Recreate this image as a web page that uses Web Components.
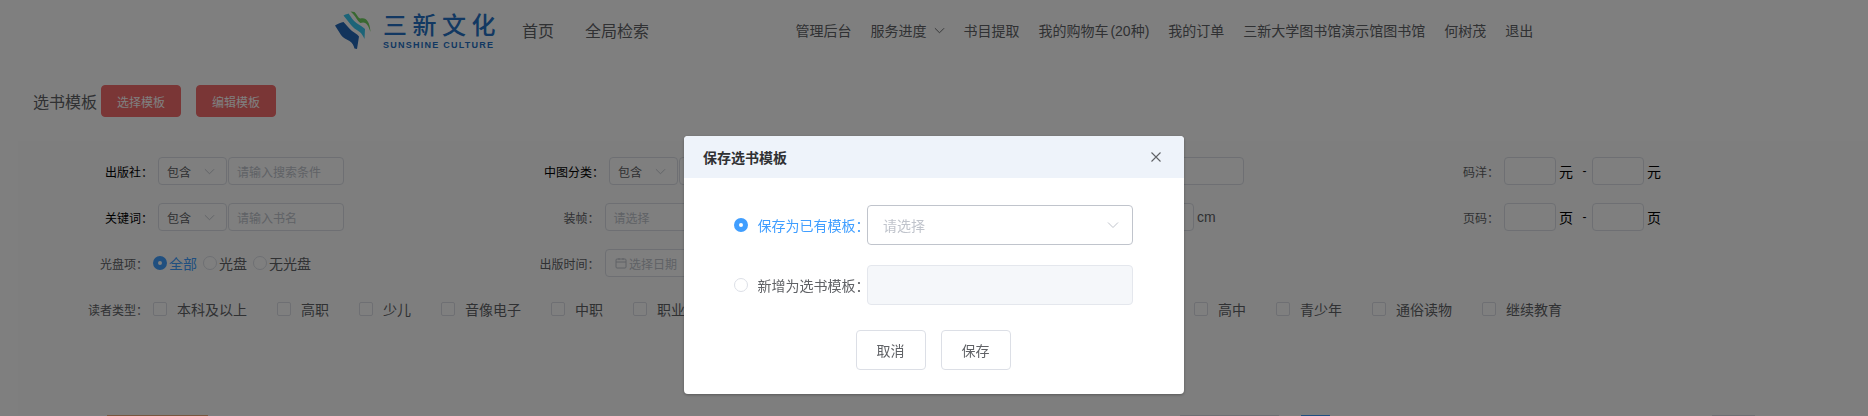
<!doctype html>
<html lang="zh">
<head>
<meta charset="utf-8">
<title>选书模板</title>
<style>
  html, body { margin: 0; height: 416px; overflow: hidden; background: #fff; }
  body { font-family: "Liberation Sans", "Noto Sans CJK SC", sans-serif; color: #606266; }
</style>
</head>
<body>
<app-nav></app-nav>

<template-bar>
  <ui-button kind="danger">选择模板</ui-button>
  <ui-button kind="danger">编辑模板</ui-button>
</template-bar>

<filter-panel>
  <filter-row>
    <filter-field label="出版社：" w="446" lw="140" strong>
      <ui-select value="包含"></ui-select>
      <ui-input w="116" placeholder="请输入搜索条件"></ui-input>
    </filter-field>
    <filter-field label="中图分类：" w="892" lw="145" strong>
      <ui-select value="包含" ></ui-select>
      <ui-input w="565"></ui-input>
    </filter-field>
    <filter-field label="码洋：" lw="148">
      <ui-input w="52"></ui-input><unit-text>元</unit-text><unit-text dash>-</unit-text>
      <ui-input w="52"></ui-input><unit-text>元</unit-text>
    </filter-field>
  </filter-row>

  <filter-row>
    <filter-field label="关键词：" w="446" lw="140" strong>
      <ui-select value="包含"></ui-select>
      <ui-input w="116" placeholder="请输入书名"></ui-input>
    </filter-field>
    <filter-field label="装帧：" w="892" lw="140.5">
      <ui-input w="589.5" placeholder="请选择"></ui-input><unit-text soft>cm</unit-text>
    </filter-field>
    <filter-field label="页码：" lw="148">
      <ui-input w="52"></ui-input><unit-text>页</unit-text><unit-text dash>-</unit-text>
      <ui-input w="52"></ui-input><unit-text>页</unit-text>
    </filter-field>
  </filter-row>

  <filter-row>
    <filter-field label="光盘项：" w="446" lw="135">
      <ui-radio checked compact>全部</ui-radio>
      <ui-radio compact>光盘</ui-radio>
      <ui-radio compact>无光盘</ui-radio>
    </filter-field>
    <filter-field label="出版时间：" lw="140.5">
      <ui-input w="220" placeholder="选择日期" date></ui-input>
    </filter-field>
  </filter-row>

  <filter-row>
    <filter-field label="读者类型：" lw="135">
      <ui-check>本科及以上</ui-check>
      <ui-check>高职</ui-check>
      <ui-check>少儿</ui-check>
      <ui-check>音像电子</ui-check>
      <ui-check>中职</ui-check>
      <ui-check style="margin-right:509px">职业</ui-check>
      <ui-check>高中</ui-check>
      <ui-check>青少年</ui-check>
      <ui-check>通俗读物</ui-check>
      <ui-check>继续教育</ui-check>
    </filter-field>
  </filter-row>
</filter-panel>

<result-strip></result-strip>

<modal-dialog heading="保存选书模板">
  <save-option checked label="保存为已有模板：">
    <ui-select big placeholder="请选择"></ui-select>
  </save-option>
  <save-option label="新增为选书模板：">
    <ui-input big disabled></ui-input>
  </save-option>
  <ui-button slot="footer">取消</ui-button>
  <ui-button slot="footer">保存</ui-button>
</modal-dialog>

<script>
function define(name, css, html, setup) {
  customElements.define(name, class extends HTMLElement {
    connectedCallback() {
      if (this.shadowRoot) return
      this.attachShadow({ mode: "open" })
      this.shadowRoot.innerHTML = `<style>${css}</style>` + (typeof html === "function" ? html(this) : html)
      if (setup) setup(this)
    }
  })
}

const chevron = (size) => `<svg width="${size}" height="${size}" viewBox="0 0 12 12" fill="none" stroke="#c0c4cc" stroke-width="1"><path d="M1 3.500l5 5 5-5"/></svg>`
// 全角冒号在 SC 字形里靠左，参考图是居中的，这里换 TC 字形
const colon = (text) => text.replace("：", `<span style="font-family:'Noto Sans CJK TC',sans-serif">：</span>`)

define("app-nav", `
  :host { display: flex; align-items: center; height: 60px; padding-left: 330px; color: #606266; }
  .logo { display: flex; align-items: flex-start; height: 60px; }
  svg.mark { margin-top: 8px; flex: none; }
  .word { margin: 10px 0 0 3px; width: 111px; color: #2470c4; }
  .cn { font: 500 24px/28px "Noto Sans CJK SC", sans-serif; letter-spacing: 5.5px; white-space: nowrap; }
  .en { font: bold 9px/10px "Liberation Sans", sans-serif; letter-spacing: 1.25px; white-space: nowrap; margin-top: 2px; }
  .main { font-size: 16px; margin-left: 28px; }
  .main + .main { margin-left: 31px; }
  ul { display: flex; gap: 19px; list-style: none; margin: 0 0 0 146.5px; padding: 0; font-size: 14px; white-space: nowrap; }
  li { display: flex; align-items: center; gap: 7px; }
  .cart { word-spacing: -2px; }
`, `
  <div class="logo">
    <svg class="mark" width="50" height="46" viewBox="0 0 50 46">
      <path fill="#2468b8" d="M5 17.500C8 15.500 11 14.500 13.500 14c3 3 5 6 8.500 9 2.500 1.500 5 3 7 5.500l-2 12.500-2.500-.5c-1-3-2-6-5-7.500-3-1.500-6.500-3-8.500-6z"/>
      <path fill="#38c8f0" d="M13.500 7.500c2-1 3.500-1.500 5-2 2.500 3.500 4.500 7 8 9.500 3 2 5.500 3.500 8.500 6l-.5 10c-1.500-3-2.500-5.500-5.500-7.500-3-2-5.500-3.500-8-6.500z"/>
      <path fill="#70d060" d="M20.500 3.500l4 .5c2.500 2.500 3.500 6 6 6.500 2-.5 3.500-.5 5 .5 2.500 2 4.500 5 5 13-1.500-4-2.500-7-4.500-8.500-2-1.500-4-1-5.500-.5-3-1.500-4.500-7-10-11.500z"/>
    </svg>
    <div class="word">
      <div class="cn">三新文化</div>
      <div class="en">SUNSHINE CULTURE</div>
    </div>
  </div>
  <span class="main">首页</span>
  <span class="main">全局检索</span>
  <ul>
    <li>管理后台</li>
    <li>服务进度 ${chevron(11).replace("#c0c4cc", "#606266")}</li>
    <li>书目提取</li>
    <li class="cart">我的购物车 (20种)</li>
    <li>我的订单</li>
    <li>三新大学图书馆演示馆图书馆</li>
    <li>何树茂</li>
    <li>退出</li>
  </ul>
`)

define("template-bar", `
  :host { display: flex; align-items: center; height: 32px; margin-top: 25px; padding-left: 33px; font-size: 16px; }
  span { margin-right: 4px; }
  ::slotted(ui-button:last-child) { margin-left: 15px; }
`, `<span>选书模板</span><slot></slot>`)

define("ui-button", `
  :host { display: inline-flex; align-items: center; justify-content: center; box-sizing: border-box; width: 70px; height: 40px;
    border: 1px solid #dcdfe6; border-radius: 4px; background: #fff; color: #606266; font-size: 14px; }
  :host([kind=danger]) { width: 80px; height: 32px; background: #f56c6c; border-color: #f56c6c; color: #fff; font-size: 12px; }
`, `<slot></slot>`)

define("filter-panel", `
  :host { display: block; box-sizing: border-box; height: 274px; margin: 24px 0 0 18px; padding-top: 16px; background: #fdfdfd; }
`, `<slot></slot>`)

define("filter-row", `
  :host { display: flex; align-items: center; height: 28px; margin-bottom: 18px; white-space: nowrap; }
`, `<slot></slot>`)

define("filter-field", `
  :host { display: flex; align-items: center; flex: none; font-size: 12px; }
  label { flex: none; box-sizing: border-box; text-align: right; color: #606266; }
  :host([strong]) label { color: #000; }
  .controls { display: flex; align-items: center; }
`, (el) => `<label style="width:${el.getAttribute("lw")}px">${colon(el.getAttribute("label"))}</label><div class="controls"><slot></slot></div>`,
(el) => {
  if (el.hasAttribute("w")) el.style.width = el.getAttribute("w") + "px"
  el.shadowRoot.querySelector("label").style.paddingRight = "5px"
})

define("ui-select", `
  :host { display: flex; align-items: center; justify-content: space-between; flex: none; box-sizing: border-box; width: 69px; height: 28px;
    margin-right: 1px; padding: 0 11px 0 8px; border: 1px solid #dcdfe6; border-radius: 4px; background: #fff; color: #606266; font-size: 12px; }
  :host([big]) { width: 266px; height: 40px; margin: 0; padding: 0 13px 0 15px; border-color: #c0c4cc; font-size: 14px; }
  .ph { color: #c0c4cc; }
`, (el) => {
  const ph = el.getAttribute("placeholder")
  const text = ph ? `<span class="ph">${ph}</span>` : `<span>${el.getAttribute("value")}</span>`
  return text + chevron(el.hasAttribute("big") ? 12 : 11)
})

define("ui-input", `
  :host { display: flex; align-items: center; gap: 2px; flex: none; box-sizing: border-box; height: 28px; padding: 0 8px;
    border: 1px solid #dcdfe6; border-radius: 4px; background: #fff; color: #c0c4cc; font-size: 12px; }
  :host([big]) { width: 266px; height: 40px; }
  :host([disabled]) { background: #f5f7fa; border-color: #e4e7ed; }
  :host([date]) { padding-left: 9.500px; }
`, (el) => {
  const date = el.hasAttribute("date") ? `<svg width="12" height="12" viewBox="0 0 12 12" fill="none" stroke="#c0c4cc"><rect x="1" y="2" width="10" height="9" rx="1"/><path d="M1 5h10M4 1v2M8 1v2"/></svg>` : ""
  return date + `<span>${el.getAttribute("placeholder") || ""}</span>`
}, (el) => {
  if (el.hasAttribute("w")) el.style.width = el.getAttribute("w") + "px"
})

define("unit-text", `
  :host { flex: none; margin: 0 4px 0 3px; font-size: 14px; color: #000; }
  :host([dash]) { margin: 0 5.500px; font-size: 12px; }
  :host([soft]) { color: #606266; }
`, `<slot></slot>`)

define("ui-radio", `
  :host { display: inline-flex; align-items: center; flex: none; gap: 10px; font-size: 14px; color: #606266; white-space: nowrap; }
  :host([compact]) { gap: 2px; margin-right: 6px; }
  i { box-sizing: border-box; width: 14px; height: 14px; border: 1px solid #dcdfe6; border-radius: 50%; background: #fff; flex: none; }
  :host([checked]) { color: #409eff; }
  :host([checked]) i { border: 5px solid #409eff; }
`, `<i></i><span><slot></slot></span>`)

define("ui-check", `
  :host { display: inline-flex; align-items: center; flex: none; gap: 10px; margin-right: 30px; font-size: 14px; color: #606266; }
  i { box-sizing: border-box; width: 14px; height: 14px; border: 1px solid #dcdfe6; border-radius: 2px; background: #fff; flex: none; }
`, `<i></i><slot></slot>`)

define("result-strip", `
  :host { display: flex; height: 1px; overflow: hidden; }
  b { display: block; flex: none; box-sizing: border-box; height: 1px; }
  .a { width: 101px; margin-left: 107px; background: #f0ad7c; }
  .b { width: 99px; margin-left: 972px; background: #dcdfe6; }
  .c { width: 29px; margin-left: 22px; background: #409eff; }
  .d { width: 43px; margin-left: 382px; background: #dcdfe6; }
`, `<b class="a"></b><b class="b"></b><b class="c"></b><b class="d"></b>`)

define("modal-dialog", `
  :host { position: fixed; inset: 0; display: flex; justify-content: center; align-items: flex-start; background: rgba(0, 0, 0, .5); }
  .box { width: 500px; height: 258px; margin-top: 136px; background: #fff; border-radius: 4px; box-shadow: 0 1px 3px rgba(0, 0, 0, .3); overflow: hidden; }
  header { display: flex; align-items: center; justify-content: space-between; height: 42px; padding: 0 22px 0 19px; background: #eef3fa;
    color: #303133; font-size: 14px; font-weight: bold; }
  .body { display: flex; flex-direction: column; gap: 20px; padding: 27px 0 0 49.500px; }
  footer { display: flex; justify-content: center; gap: 15px; margin-top: 25px; padding-right: 2px; }
`, (el) => `
  <div class="box">
    <header>
      <span>${el.getAttribute("heading")}</span>
      <svg width="12" height="12" viewBox="0 0 12 12" stroke="#606266" stroke-width="1.100"><path d="M1.500 1.500l9 9M10.500 1.500l-9 9"/></svg>
    </header>
    <div class="body"><slot></slot></div>
    <footer><slot name="footer"></slot></footer>
  </div>
`)

define("save-option", `
  :host { display: flex; align-items: center; height: 40px; }
  .label { width: 133.5px; flex: none; }
`, (el) => `<ui-radio class="label" ${el.hasAttribute("checked") ? "checked" : ""}>${colon(el.getAttribute("label"))}</ui-radio><slot></slot>`)
</script>
</body>
</html>
